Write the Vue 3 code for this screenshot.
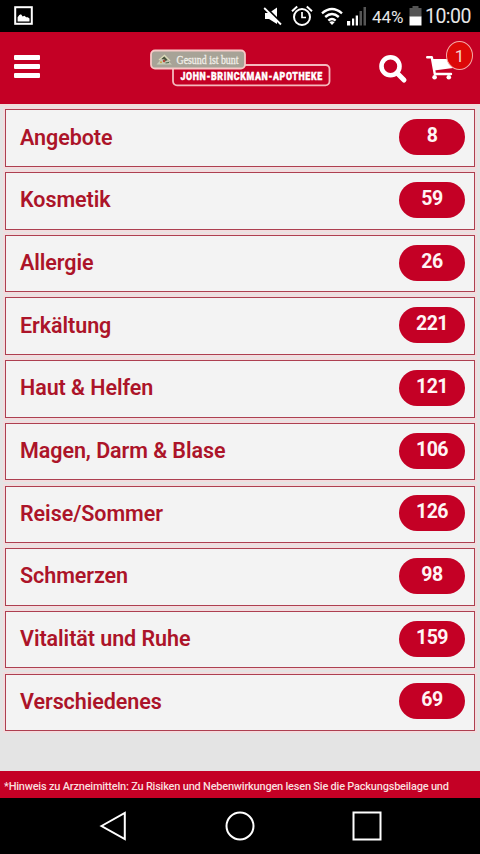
<script setup>
const categories = [
  { name: 'Angebote', count: 8 },
  { name: 'Kosmetik', count: 59 },
  { name: 'Allergie', count: 26 },
  { name: 'Erkältung', count: 221 },
  { name: 'Haut & Helfen', count: 121 },
  { name: 'Magen, Darm & Blase', count: 106 },
  { name: 'Reise/Sommer', count: 126 },
  { name: 'Schmerzen', count: 98 },
  { name: 'Vitalität und Ruhe', count: 159 },
  { name: 'Verschiedenes', count: 69 },
]
</script>

<template>
  <div class="screen">
    <div class="status">
      <svg class="picture" width="20" height="20" viewBox="0 0 20 20">
        <rect x="1.2" y="1.2" width="16.6" height="16.6" fill="none" stroke="#fff" stroke-width="2" />
        <path d="M3.6 15.5V11.2L5.3 9 7 8.2 8.7 10.4 10.4 9.7 12.2 11.2H13.8L15.5 12.6V15.5Z" fill="#fff" />
      </svg>
      <svg class="mute" width="20" height="20" viewBox="0 0 20 20">
        <path d="M2 7H6L14 1.5V18L6 13H2Z" fill="#fff" />
        <path d="M2 1L19 18" stroke="#000" stroke-width="2.6" />
        <path d="M1.2 2L18 18.5" stroke="#fff" stroke-width="1.8" />
      </svg>
      <svg class="alarm" width="22" height="22" viewBox="0 0 22 22" fill="none" stroke="#fff">
        <circle cx="11" cy="12" r="8" stroke-width="2" />
        <path d="M11 7V12.5H15" stroke-width="1.7" />
        <path d="M1 6.2L6.2 1.6M21 6.2L15.8 1.6" stroke-width="2" />
      </svg>
      <svg class="wifi" width="22" height="19" viewBox="0 0 22 19" fill="none" stroke="#fff" stroke-width="2.4">
        <path d="M1 6.3Q11-2.3 21 6.3" />
        <path d="M4.2 10Q11 3.8 17.8 10" />
        <path d="M7.4 13.7Q11 10.2 14.6 13.7" />
        <path d="M8.4 15.2Q11 13.2 13.6 15.2L11 18Z" fill="#fff" stroke="none" />
      </svg>
      <svg class="signal" width="20" height="20" viewBox="0 0 20 20">
        <path d="M0 15H3.2V19.5H0ZM5 12.5H7.2V19.5H5ZM8.7 9.5H11V19.5H8.7Z" fill="#fff" />
        <path d="M12.5 5H15V19.5H12.5ZM16.5 1H19V19.5H16.5Z" fill="#555" />
      </svg>
      <span class="percent">44%</span>
      <svg class="battery" width="13" height="20" viewBox="0 0 13 20">
        <path d="M3.5 0H9.5V2H12.5V11H0.5V2H3.5Z" fill="#555" />
        <path d="M0.5 10.5H12.5V19.5H0.5Z" fill="#fff" />
      </svg>
      <span class="clock">10:00</span>
    </div>

    <header class="bar">
      <div class="burger"><i></i><i></i><i></i></div>
      <svg class="logo" width="182" height="40" viewBox="0 0 182 40">
        <rect x="23" y="16" width="156.5" height="20.3" rx="4" fill="#c40025" stroke="#f4b9bd" stroke-width="1.8" />
        <rect x="1" y="1.5" width="94" height="18" rx="4" fill="#a7a397" stroke="#f6c9c7" stroke-width="1.8" />
        <path d="M6.5 15.5L11.5 10 16 15.5ZM13 15.5L17 11 22 15.5Z" fill="#c9cdb8" />
        <path d="M9 11L14.5 6.5 20 12" fill="none" stroke="#dcdcba" stroke-width="1.4" />
        <path d="M11.5 10L14.2 7.5 17.5 11 15.5 12 14 10Z" fill="#46533b" />
        <circle cx="14" cy="12" r="1.2" fill="#b84336" />
        <circle cx="11" cy="13.2" r="1" fill="#c7aa42" />
        <path d="M15.5 14L19 13.5" stroke="#496347" stroke-width="1.2" />
        <text class="slogan" x="26.5" y="15.2" textLength="62" lengthAdjust="spacingAndGlyphs">Gesund ist bunt</text>
        <text class="brand" transform="translate(30.5 31) scale(.8 1)" x="0" y="0" textLength="177" lengthAdjust="spacing">JOHN-BRINCKMAN-APOTHEKE</text>
      </svg>
      <svg class="search" width="30" height="30" viewBox="0 0 30 30" fill="none" stroke="#fff">
        <circle cx="12.5" cy="12.2" r="9" stroke-width="4.6" />
        <path d="M19 19L26 26" stroke-width="5" stroke-linecap="round" />
      </svg>
      <div class="basket">
        <svg width="30" height="28" viewBox="0 0 30 28">
          <path d="M1.2 3.2H5.8L8.8 20H25" fill="none" stroke="#fff" stroke-width="2.4" stroke-linecap="round" stroke-linejoin="round" />
          <path d="M6 5H27V14L8.2 16.5Z" fill="#fff" />
          <circle cx="8.6" cy="23.2" r="2.3" fill="#fff" />
          <circle cx="22.8" cy="23.2" r="2.3" fill="#fff" />
        </svg>
        <span class="badge">1</span>
      </div>
    </header>

    <main class="list">
      <div v-for="c in categories" :key="c.name" class="row">
        <span class="name">{{ c.name }}</span>
        <span class="count">{{ c.count }}</span>
      </div>
    </main>

    <footer class="note"><span>*Hinweis zu Arzneimitteln: Zu Risiken und Nebenwirkungen lesen Sie die Packungsbeilage und</span></footer>

    <nav class="nav">
      <svg width="30" height="32" viewBox="0 0 30 32"><path d="M3.5 16L26.8 3V29Z" fill="none" stroke="#fff" stroke-width="2" /></svg>
      <svg width="32" height="32" viewBox="0 0 32 32"><circle cx="16" cy="16" r="13.5" fill="none" stroke="#fff" stroke-width="2" /></svg>
      <svg width="32" height="32" viewBox="0 0 32 32"><rect x="2.5" y="2.5" width="27" height="27" fill="none" stroke="#fff" stroke-width="2" /></svg>
    </nav>
  </div>
</template>

<style>
body { margin: 0; background: #000; }
</style>

<style scoped>
.screen {
  width: 480px;
  height: 854px;
  display: flex;
  flex-direction: column;
  overflow: hidden;
  background: #e4e4e4;
  font-family: Roboto, "Liberation Sans", sans-serif;
}
svg { display: block; flex: none; }
.status {
  flex: none;
  height: 32px;
  box-sizing: border-box;
  display: flex;
  align-items: center;
  padding: 0 9px 0 14px;
  background: #000;
  color: #e6e6e6;
  white-space: nowrap;
}
.picture { margin-right: 229px; }
.mute { margin-right: 8px; }
.alarm { margin-right: 8px; }
.wifi { margin-right: 4px; }
.signal { margin-right: 5px; }
.percent { width: 37px; font-size: 17px; line-height: 32px; padding-top: 2px; }
.clock { margin-left: 3px; font-size: 19.5px; line-height: 32px; letter-spacing: -0.5px; padding-top: 2px; }
.bar {
  flex: none;
  height: 72px;
  box-sizing: border-box;
  display: flex;
  align-items: flex-start;
  padding-left: 14px;
  background: #c40025;
}
.burger { width: 26px; display: grid; gap: 4px; padding-top: 23px; }
.burger i { height: 5px; background: #fff; border-radius: 1px; }
.logo { margin: 17px 0 0 110px; overflow: visible; }
.slogan { font: 400 12px "Liberation Serif", serif; fill: #f1efe9; stroke: #f1efe9; stroke-width: 0.3px; }
.brand { font: 900 11px "Roboto", sans-serif; fill: #fff; stroke: #fff; stroke-width: 0.4px; }
.search { margin: 22px 0 0 46px; }
.basket { position: relative; margin: 22px 0 0 18px; }
.badge {
  position: absolute;
  left: 20px;
  top: -13px;
  width: 27px;
  height: 29px;
  box-sizing: border-box;
  border: 1.5px solid #f4aaa7;
  border-radius: 50%;
  background: #dc0808;
  color: #f4d5cf;
  font-size: 17px;
  line-height: 28px;
  text-align: center;
}
.list {
  flex: 1;
  display: grid;
  grid-auto-rows: 57.5px;
  align-content: start;
  gap: 5.2px;
  padding: 5.4px 5px 0;
  box-shadow: inset 0 2px #f1dcda;
}
.row {
  display: flex;
  align-items: center;
  justify-content: space-between;
  box-sizing: border-box;
  padding: 0 9px 0 14px;
  border: 1px solid #ad3f50;
  background: #f3f3f3;
  box-shadow: 0 0 0 2px #f2dcde;
}
.name { color: #ac1429; font-size: 21.5px; font-weight: 600; line-height: 26px; padding-bottom: 1px; letter-spacing: -0.06px; }
.count {
  width: 66px;
  height: 36px;
  box-sizing: border-box;
  margin-bottom: 2px;
  border-radius: 18px;
  background: #c40025;
  color: #fff4f4;
  font-size: 19.5px;
  font-weight: 700;
  letter-spacing: -0.5px;
  line-height: 34px;
  text-align: center;
}
.note {
  flex: none;
  height: 27px;
  padding-left: 4px;
  background: #c40025;
  color: #f9dede;
  font-size: 11px;
  font-weight: 500;
  letter-spacing: -0.215px;
  line-height: 31px;
  white-space: nowrap;
}
.nav {
  flex: none;
  height: 56px;
  box-sizing: border-box;
  display: flex;
  align-items: center;
  justify-content: space-between;
  padding: 0 97px 0 98px;
  background: #000;
}
</style>
